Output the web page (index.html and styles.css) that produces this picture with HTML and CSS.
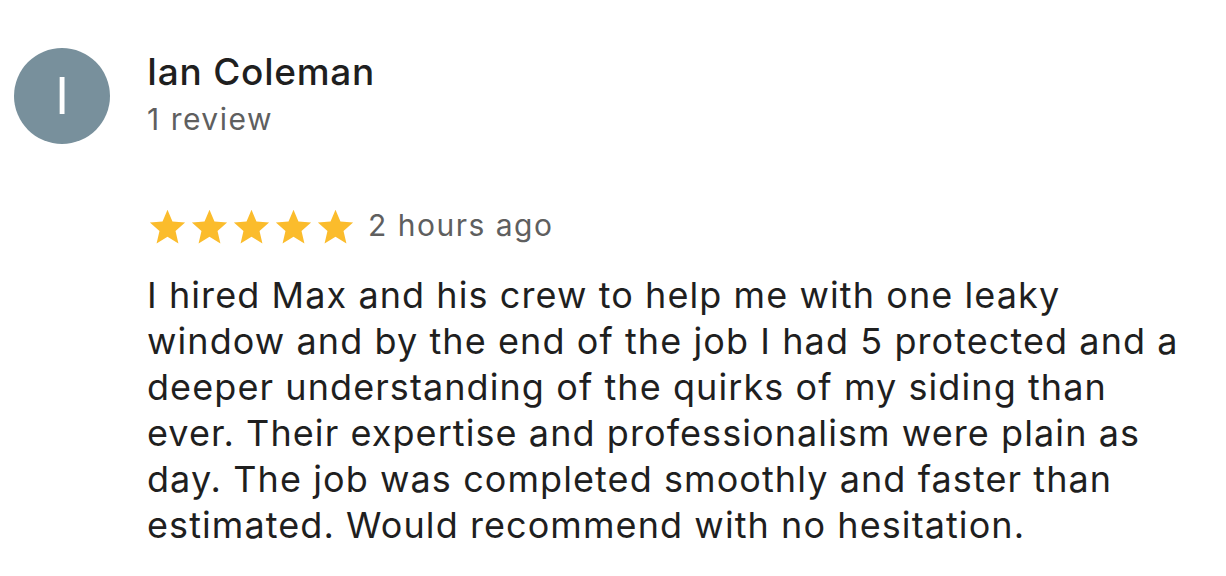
FILE: index.html
```html
<!DOCTYPE html>
<html>
<head>
<meta charset="utf-8">
<link rel="stylesheet" href="styles.css">
</head>
<body>
<div class="review">
  <div class="header">
    <div class="avatar">I</div>
    <div class="who">
      <div class="name">Ian Coleman</div>
      <div class="count">1 review</div>
    </div>
  </div>
  <div class="content">
    <div class="meta">
      <div class="stars">
        <svg viewBox="0 0 24 24" class="star"><path d="M12 2.2l2.9 6.9 7.4.6-5.6 4.9 1.7 7.3L12 18l-6.4 3.9 1.7-7.3-5.6-4.9 7.4-.6z"/></svg>
        <svg viewBox="0 0 24 24" class="star"><path d="M12 2.2l2.9 6.9 7.4.6-5.6 4.9 1.7 7.3L12 18l-6.4 3.9 1.7-7.3-5.6-4.9 7.4-.6z"/></svg>
        <svg viewBox="0 0 24 24" class="star"><path d="M12 2.2l2.9 6.9 7.4.6-5.6 4.9 1.7 7.3L12 18l-6.4 3.9 1.7-7.3-5.6-4.9 7.4-.6z"/></svg>
        <svg viewBox="0 0 24 24" class="star"><path d="M12 2.2l2.9 6.9 7.4.6-5.6 4.9 1.7 7.3L12 18l-6.4 3.9 1.7-7.3-5.6-4.9 7.4-.6z"/></svg>
        <svg viewBox="0 0 24 24" class="star"><path d="M12 2.2l2.9 6.9 7.4.6-5.6 4.9 1.7 7.3L12 18l-6.4 3.9 1.7-7.3-5.6-4.9 7.4-.6z"/></svg>
      </div>
      <span class="time">2 hours ago</span>
    </div>
    <p class="text">I hired Max and his crew to help me with one leaky window and by the end of the job I had 5 protected and a deeper understanding of the quirks of my siding than ever. Their expertise and professionalism were plain as day. The job was completed smoothly and faster than estimated. Would recommend with no hesitation.</p>
  </div>
</div>
</body>
</html>
```

FILE: styles.css
```css
html, body {
  margin: 0;
  padding: 0;
  background: #ffffff;
}
body {
  font-family: Inter, "Noto Sans", "Liberation Sans", sans-serif;
  color: #1f1f1f;
}
.review {
  padding: 48px 0 0 14px;
}
.header {
  display: flex;
  align-items: flex-start;
  gap: 37px;
}
.avatar {
  width: 96px;
  height: 96px;
  border-radius: 50%;
  background: #78909c;
  color: #ffffff;
  font-size: 51px;
  font-weight: 400;
  line-height: 96px;
  text-align: center;
}
.who {
  padding-top: 2px;
}
.name {
  font-size: 37px;
  font-weight: 500;
  line-height: 44px;
  letter-spacing: 0.02em;
  color: #1f1f1f;
}
.count {
  margin-top: 5px;
  font-size: 30px;
  line-height: 40px;
  letter-spacing: 0.05em;
  color: #5f5f5f;
}
.content {
  padding-left: 133px;
  margin-top: 62px;
}
.meta {
  display: flex;
  align-items: flex-start;
  gap: 12px;
}
.stars {
  display: flex;
  gap: 1px;
}
.star {
  width: 41px;
  height: 41px;
  fill: #fbbc2c;
}
.time {
  font-size: 30px;
  line-height: 38px;
  letter-spacing: 0.05em;
  color: #5f5f5f;
}
.text {
  margin: 25px 0 0;
  width: 1045px;
  font-size: 36px;
  line-height: 46px;
  letter-spacing: 0.03em;
  color: #1f1f1f;
}
```
